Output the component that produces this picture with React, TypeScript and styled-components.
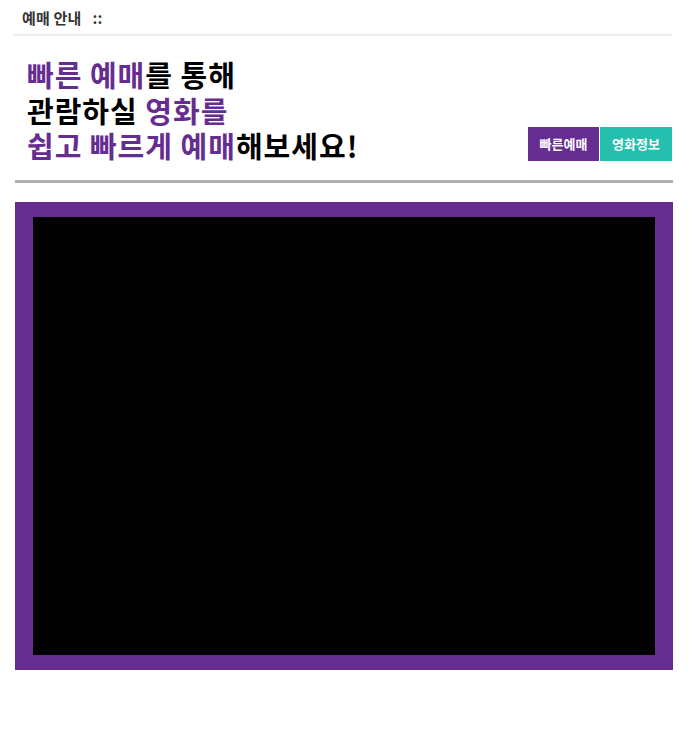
import React from "react";
import styled, { createGlobalStyle } from "styled-components";

const Global = createGlobalStyle`
  html, body { margin: 0; padding: 0; background: #fff; }
  body { font-family: "Noto Sans CJK KR", "Noto Sans", sans-serif; }
`;

const Page = styled.div`
  width: 693px;
`;

const TopBar = styled.div`
  margin: 0 21px 0 13px;
  height: 34px;
  border-bottom: 2px solid #eeeeee;
  display: flex;
  align-items: center;
  padding-left: 9px;
`;

const TopTitle = styled.h1`
  margin: 0;
  font-size: 15px;
  font-weight: 700;
  color: #333;
  letter-spacing: 0.2px;
  white-space: pre;
`;

const Section = styled.section`
  margin: 0 20px 0 15px;
`;

const HeadRow = styled.div`
  display: flex;
  justify-content: space-between;
  align-items: flex-end;
  padding: 21px 0 16px 12px;
  border-bottom: 3px solid #b0b0b0;
`;

const Heading = styled.h2`
  margin: 0;
  font-size: 29px;
  line-height: 35.5px;
  font-weight: 700;
  color: #000;
  letter-spacing: 1px;
`;

const Em = styled.span`
  color: #662d91;
`;

const Buttons = styled.div`
  display: flex;
  gap: 1px;
  margin-bottom: 3px;
  margin-right: 1px;
`;

const TabButton = styled.button<{ $bg: string }>`
  border: 0;
  margin: 0;
  padding: 0;
  width: 71px;
  height: 34px;
  background: ${(p) => p.$bg};
  color: #fff;
  font-family: inherit;
  font-size: 13px;
  font-weight: 700;
  letter-spacing: 0;
  cursor: pointer;
  &:last-child { width: 72px; }
`;

const Frame = styled.div`
  margin-top: 19px;
  background: #662d91;
  padding: 15px 18px;
`;

const Screen = styled.div`
  background: #000;
  height: 438px;
`;

export default function App() {
  return (
    <Page>
      <Global />
      <TopBar>
        <TopTitle>{"예매 안내   ::"}</TopTitle>
      </TopBar>
      <Section>
        <HeadRow>
          <Heading>
            <Em>빠른 예매</Em>를 통해
            <br />
            관람하실 <Em>영화를</Em>
            <br />
            <Em>쉽고 빠르게 예매</Em>해보세요!
          </Heading>
          <Buttons>
            <TabButton $bg="#662d91">빠른예매</TabButton>
            <TabButton $bg="#24bfad">영화정보</TabButton>
          </Buttons>
        </HeadRow>
        <Frame>
          <Screen />
        </Frame>
      </Section>
    </Page>
  );
}
